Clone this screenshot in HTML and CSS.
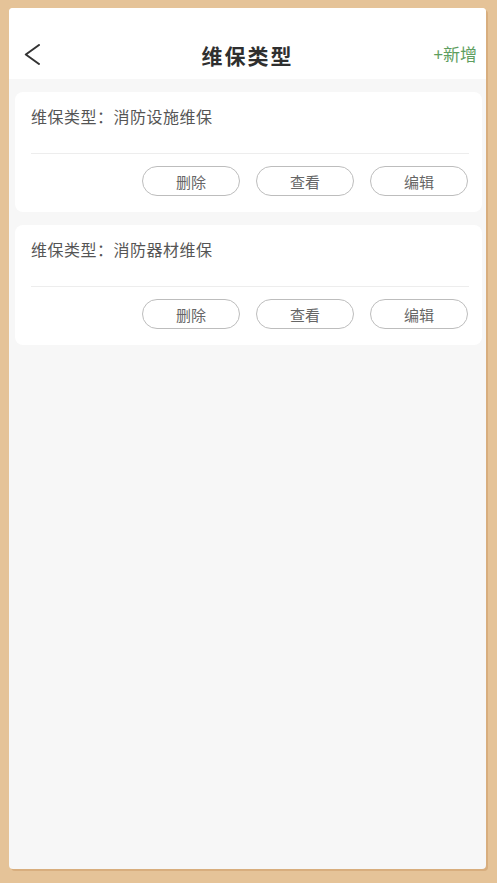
FILE: index.html
```html
<!DOCTYPE html>
<html lang="zh-CN">
<head>
<meta charset="utf-8">
<title>维保类型</title>
<link rel="stylesheet" href="styles.css">
</head>
<body>
<div class="frame">
  <header class="header">
    <div class="bar">
      <div class="left">
        <svg class="back" width="18" height="22" viewBox="0 0 18 22"><path d="M15 1 L1.8 10.5 L15 20" fill="none" stroke="#333" stroke-width="2" stroke-linecap="round" stroke-linejoin="round"/></svg>
      </div>
      <h1 class="title">维保类型</h1>
      <div class="right"><span class="add">+新增</span></div>
    </div>
  </header>
  <main class="content">
    <section class="card">
      <div class="card-text">维保类型：消防设施维保</div>
      <div class="divider"></div>
      <div class="actions">
        <button class="btn">删除</button>
        <button class="btn">查看</button>
        <button class="btn">编辑</button>
      </div>
    </section>
    <section class="card">
      <div class="card-text">维保类型：消防器材维保</div>
      <div class="divider"></div>
      <div class="actions">
        <button class="btn">删除</button>
        <button class="btn">查看</button>
        <button class="btn">编辑</button>
      </div>
    </section>
  </main>
</div>
</body>
</html>
```

FILE: styles.css
```css
* { box-sizing: border-box; }
html, body {
  margin: 0;
  padding: 0;
  background: #e5c398;
  font-family: "Noto Sans CJK SC", "Noto Sans", sans-serif;
}
body {
  width: 497px;
  height: 883px;
  overflow: hidden;
}
.frame {
  margin: 8px 0 0 9px;
  width: 477px;
  height: 861px;
  border-radius: 4px;
  background: #f7f7f7;
  box-shadow: 2px 2px 0 #d8ae7e;
  overflow: hidden;
  display: flex;
  flex-direction: column;
}
.header {
  background: #ffffff;
  padding-top: 23px;
  height: 71px;
}
.bar {
  height: 48px;
  display: grid;
  grid-template-columns: 1fr auto 1fr;
  align-items: center;
}
.left {
  padding-left: 15px;
  display: flex;
  align-items: center;
}
.back { display: block; }
.title {
  margin: 0;
  font-size: 21px;
  font-weight: 700;
  color: #2f2f2f;
  letter-spacing: 2px;
  line-height: 1;
}
.right {
  display: flex;
  justify-content: flex-end;
  padding-right: 9px;
}
.add {
  color: #5e9e60;
  font-size: 17px;
  line-height: 1;
  margin-bottom: 3px;
}
.content {
  flex: 1;
  padding: 13px 4px 0 6px;
  display: flex;
  flex-direction: column;
  gap: 13px;
}
.card {
  background: #ffffff;
  border-radius: 8px;
  padding: 0 13px 16px 16px;
}
.card-text {
  padding: 13px 0 26px;
  line-height: 22px;
  font-size: 16px;
  letter-spacing: 0.5px;
  color: #555555;
}
.divider {
  height: 1px;
  background: #ededed;
}
.actions {
  display: flex;
  justify-content: flex-end;
  gap: 16px;
  padding: 12px 1px 0 0;
}
.btn {
  width: 98px;
  height: 30px;
  border: 1px solid #bdbdbd;
  border-radius: 15px;
  background: #ffffff;
  color: #666666;
  font-family: "Noto Sans CJK SC", "Noto Sans", sans-serif;
  font-size: 15px;
  padding: 0;
  line-height: 1;
}
```
